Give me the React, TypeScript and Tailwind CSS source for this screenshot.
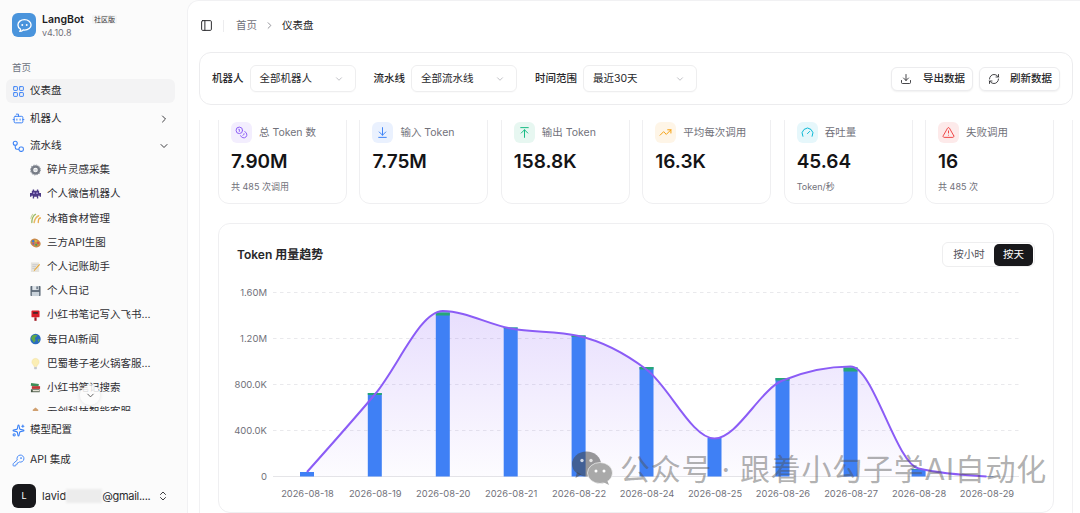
import React from "react";
import {
  LayoutGrid,
  Bot,
  ChevronRight,
  ChevronDown,
  ChevronsUpDown,
  Sparkles,
  KeyRound,
  PanelLeft,
  Download,
  RefreshCw,
  Coins,
  ArrowDownToLine,
  ArrowUpToLine,
  TrendingUp,
  Gauge,
  TriangleAlert,
} from "lucide-react";

const FONT = "font-['Inter','Noto_Sans_CJK_SC',sans-serif]";

const Gear = () => (
  <svg viewBox="0 0 12 12" className="w-[12px] h-[12px]">
    <circle cx="6" cy="6" r="3.900" fill="none" stroke="#777c86" strokeWidth="2.800" />
    <circle cx="6" cy="6" r="5.400" fill="none" stroke="#a0a5ad" strokeWidth="1.200" strokeDasharray="1.400 1.400" />
    <circle cx="6" cy="6" r="1.500" fill="#d5d8dc" />
  </svg>
);
const Alien = () => (
  <svg viewBox="0 0 12 12" className="w-[12px] h-[12px]">
    <path d="M3 1h1.500v1.500h3V1H9v1.500h1V5h2v4h-1.500V8H9v3H7.500V9h-3v2H3V8H1.500v1H0V5h2V2.500h1z" fill="#4c3a86" />
    <rect x="3.600" y="4.200" width="1.400" height="1.800" fill="#b9a6e8" />
    <rect x="7" y="4.200" width="1.400" height="1.800" fill="#b9a6e8" />
  </svg>
);
const Rice = () => (
  <svg viewBox="0 0 12 12" className="w-[12px] h-[12px]" fill="none" strokeLinecap="round">
    <path d="M2 11C2 7 3 4 6 2" stroke="#9ab860" strokeWidth="1.400" />
    <path d="M4.500 11C5 8 6 5 9.500 3.500" stroke="#e8b860" strokeWidth="1.600" />
    <path d="M9 11C9 8 10 6 11.500 6" stroke="#e8a848" strokeWidth="1.400" />
    <path d="M1 6.500C1.200 4.500 2 3 3 2" stroke="#c9d49a" strokeWidth="1.200" />
  </svg>
);
const Palette = () => (
  <svg viewBox="0 0 12 12" className="w-[12px] h-[12px]">
    <ellipse cx="6" cy="6" rx="5.800" ry="4.600" fill="#c98a4a" transform="rotate(25 6 6)" />
    <circle cx="3.400" cy="4" r="1.300" fill="#3a7bd5" />
    <circle cx="6.400" cy="3.800" r="1.200" fill="#e0c030" />
    <circle cx="8.800" cy="6" r="1.200" fill="#d84848" />
    <circle cx="6.800" cy="8" r="1.200" fill="#50a050" />
    <circle cx="3.600" cy="6.800" r="1" fill="#9050b0" />
  </svg>
);
const Memo = () => (
  <svg viewBox="0 0 12 12" className="w-[12px] h-[12px]">
    <rect x="1" y="1" width="9" height="10.400" fill="#e6e4de" />
    <path d="M2.500 3.500h6M2.500 5.500h4M2.500 7.500h3" stroke="#b8bcc4" strokeWidth=".7" />
    <path d="M11 3.500L5.500 9.500 4 11l.6-2L10 2.800z" fill="#e8a838" />
  </svg>
);
const Floppy = () => (
  <svg viewBox="0 0 12 12" className="w-[12px] h-[12px]">
    <rect x="0.500" y="0.500" width="11" height="11" rx=".8" fill="#5d6a78" />
    <rect x="2.500" y="0.500" width="7" height="4.500" fill="#dfe5ea" />
    <rect x="7" y="1" width="1.500" height="3" fill="#5d6a78" />
    <rect x="2" y="7" width="8" height="4.500" fill="#c9d2da" />
  </svg>
);
const Postbox = () => (
  <svg viewBox="0 0 12 12" className="w-[12px] h-[13px]">
    <rect x="1.600" y="0.500" width="8.800" height="7.500" rx="1" fill="#d81e28" />
    <rect x="3.400" y="2.400" width="5.200" height="1.600" fill="#2a2a2a" />
    <rect x="4.800" y="8" width="2.400" height="3.800" fill="#a01820" />
  </svg>
);
const Globe = () => (
  <svg viewBox="0 0 12 12" className="w-[12px] h-[12px]">
    <circle cx="6" cy="6" r="5.700" fill="#2a6cc0" />
    <path d="M3 2c2-1 4-1 5 0-1 1.500-1 2-2.500 2.500C5 6 6.500 6.500 6 8 5 9 4.500 10 4 10 3.500 8 2 7 1.200 5.500 1.500 4 2 3 3 2zM8.500 6.500l2-.5c0 1.500-.5 2.500-1.500 3.500z" fill="#5fa848" />
  </svg>
);
const Bulb = () => (
  <svg viewBox="0 0 12 14" className="w-[12px] h-[14px]">
    <path d="M6 .8a4 4 0 0 0-2.400 7.200c.6.5.8 1 .8 1.800h3.200c0-.8.2-1.300.8-1.800A4 4 0 0 0 6 .8z" fill="#fbeeb4" stroke="#f0dfa0" strokeWidth=".5" />
    <rect x="4.500" y="10.200" width="3" height="2.400" rx=".6" fill="#c4c8cc" />
  </svg>
);
const Books = () => (
  <svg viewBox="0 0 12 12" className="w-[12px] h-[12px]">
    <rect x="1" y="1" width="8.500" height="3" fill="#3e8e58" transform="rotate(8 5 2.500)" />
    <rect x="2" y="4" width="9" height="3" fill="#c03838" />
    <rect x="1" y="7.400" width="9.500" height="3.200" fill="#4a5a48" />
    <rect x="3" y="8.200" width="7" height="1.400" fill="#e8e4d8" />
  </svg>
);
const School = () => (
  <svg viewBox="0 0 12 12" className="w-[12px] h-[12px]">
    <path d="M6 1l3 2.500v1.500H3V3.500z" fill="#d0a070" />
    <rect x="1" y="5" width="10" height="6.500" fill="#cfe0ea" />
    <rect x="2.500" y="6.500" width="1.500" height="1.500" fill="#5a90c0" />
    <rect x="8" y="6.500" width="1.500" height="1.500" fill="#5a90c0" />
  </svg>
);

const FlowIcon = () => (
  <svg viewBox="0 0 24 24" className="w-[13px] h-[13px] text-[#3b82f6]" fill="none" stroke="currentColor" strokeWidth="2">
    <circle cx="6" cy="6" r="3.700" />
    <rect x="13" y="13" width="8" height="8" rx="3" />
    <path d="M6 9.700V14a3 3 0 0 0 3 3h4" />
  </svg>
);

const pipelines: [React.ReactNode, string][] = [
  [<Gear />, "碎片灵感采集"],
  [<Alien />, "个人微信机器人"],
  [<Rice />, "冰箱食材管理"],
  [<Palette />, "三方API生图"],
  [<Memo />, "个人记账助手"],
  [<Floppy />, "个人日记"],
  [<Postbox />, "小红书笔记写入飞书..."],
  [<Globe />, "每日AI新闻"],
  [<Bulb />, "巴蜀巷子老火锅客服..."],
  [<Books />, "小红书笔记搜索"],
  [<School />, "云创科技智能客服"],
];

function Logo() {
  return (
    <div className="w-6 h-6 rounded-[6px] bg-[#4a94dc] flex items-center justify-center shrink-0">
      <svg viewBox="0 0 24 24" className="w-[19px] h-[19px]" fill="none">
        <path
          d="M12 4.500c-4.700 0-8.300 3-8.300 6.800 0 2.300 1.300 4.200 3.400 5.400-.1 1-.6 2-1.200 2.700 1.700-.1 3.300-.8 4.400-1.800.6.100 1.100.2 1.700.2 4.700 0 8.300-3 8.300-6.500S16.700 4.500 12 4.500z"
          stroke="#fff"
          strokeWidth="1.700"
          strokeLinejoin="round"
        />
        <circle cx="9.200" cy="11.300" r="1.200" fill="#fff" />
        <circle cx="14.800" cy="11.300" r="1.200" fill="#fff" />
      </svg>
    </div>
  );
}

function Sidebar() {
  return (
    <aside className="w-[187px] shrink-0 h-full flex flex-col bg-[#fbfbfb]">
      <div className="flex gap-[6px] pl-3 pt-[13px] h-[49px] shrink-0 items-start">
        <Logo />
        <div className="flex flex-col -mt-[0.500px]">
          <div className="flex items-center gap-[8px] h-[14px]">
            <span className="text-[10.500px] font-semibold text-[#1c1c1e]">LangBot</span>
            <span className="text-[7px] text-[#333] bg-[#f4f4f4] rounded-[2px] px-[2px] leading-[9px]">社区版</span>
          </div>
          <span className="text-[9px] leading-[12px] text-[#71717a]">v4.10.8</span>
        </div>
      </div>
      <div className="pl-3 pt-[12px] text-[9.500px] leading-[14px] text-[#6b7280]">首页</div>
      <div className="px-[6px] mt-[4px] flex flex-col gap-[3.500px] shrink-0">
        <div className="h-6 rounded-[6px] bg-[#f3f3f4] flex items-center pl-[6px] gap-[5px] text-[#2a2a2d] text-[10.500px] mr-[6px]">
          <LayoutGrid size={13} strokeWidth={1.800} className="text-[#3b82f6]" />
          <span>仪表盘</span>
        </div>
        <div className="h-6 flex items-center pl-[6px] gap-[5px] text-[#2a2a2d] text-[10.500px] mr-[6px]">
          <Bot size={13} strokeWidth={1.800} className="text-[#3b82f6]" />
          <span className="flex-1">机器人</span>
          <ChevronRight size={12} strokeWidth={1.800} className="mr-[5px] text-[#27272a]" />
        </div>
        <div className="h-6 flex items-center pl-[6px] gap-[5px] text-[#2a2a2d] text-[10.500px] mr-[6px]">
          <FlowIcon />
          <span className="flex-1">流水线</span>
          <ChevronDown size={12} strokeWidth={1.800} className="mr-[5px] text-[#27272a]" />
        </div>
      </div>
      <div className="relative h-[253px] shrink-0 overflow-hidden">
        <div className="flex flex-col pl-[30px]">
          {pipelines.map(([icon, name]) => (
            <div key={name} className="h-[24.200px] shrink-0 flex items-center gap-[6px] text-[10.500px] text-[#2e2e33]">
              <span className="w-[11px] flex items-center justify-center">{icon}</span>
              <span>{name}</span>
            </div>
          ))}
        </div>
        <div className="absolute left-[80px] top-[227px] w-5 h-5 rounded-full bg-[#fbfbfb]/85 shadow-[0_0_4px_rgba(0,0,0,0.12)] flex items-center justify-center">
          <ChevronDown size={11} className="text-[#555]" />
        </div>
      </div>
      <div className="flex flex-col pl-[12px] pt-[8px] shrink-0">
        <div className="h-[22px] flex items-center gap-[5px] text-[10.500px] text-[#2a2a2d]">
          <Sparkles size={13} strokeWidth={2} className="text-[#3b82f6]" />
          <span>模型配置</span>
        </div>
        <div className="h-[22px] mt-2 flex items-center gap-[5px] text-[10.500px] text-[#2a2a2d]">
          <KeyRound size={13} strokeWidth={1.700} className="text-[#3b82f6]" />
          <span>API 集成</span>
        </div>
      </div>
      <div className="flex items-center pl-3 mt-[13px] shrink-0">
        <div className="w-6 h-6 rounded-[6px] bg-[#18181b] text-white text-[9px] flex items-center justify-center shrink-0">L</div>
        <div className="flex items-center ml-[6px] text-[11px] text-[#2a2a2d] w-[109px] shrink-0 whitespace-nowrap">
          <span>lavid</span>
          <span className="w-[36px] h-[14px] shrink-0 bg-[#ececec] blur-[1px]" />
          <span className="tracking-[-0.3px]">@gmail....</span>
        </div>
        <ChevronsUpDown size={12} strokeWidth={1.800} className="ml-[6px] text-[#27272a]" />
      </div>
    </aside>
  );
}

function Select({ text, width }: { text: string; width: string }) {
  return (
    <div className={`${width} h-[27px] rounded-[6px] border border-[#eeeeef] bg-white shadow-[0_1px_1px_rgba(0,0,0,0.02)] flex items-center justify-between pl-[9px] pr-[11px] text-[10.500px] text-[#27272a]`}>
      <span>{text}</span>
      <ChevronDown size={10} className="text-[#b5b5ba]" />
    </div>
  );
}

function ActionButton({ icon, text, width }: { icon: React.ReactNode; text: string; width: string }) {
  return (
    <div className={`${width} h-6 rounded-[6px] border border-[#ececee] bg-white shadow-[0_1px_2px_rgba(0,0,0,0.06)] flex items-center justify-between pl-[8px] pr-[7px] text-[10.500px] font-medium text-[#27272a]`}>
      {icon}
      <span>{text}</span>
    </div>
  );
}

type Stat = { icon: React.ReactNode; bg: string; label: string; value: string; sub?: string };
const stats: Stat[] = [
  { icon: <Coins size={13} strokeWidth={1.800} className="text-[#8b5cf6]" />, bg: "bg-[#f3eefe]", label: "总 Token 数", value: "7.90M", sub: "共 485 次调用" },
  { icon: <ArrowDownToLine size={13} strokeWidth={1.800} className="text-[#3b82f6]" />, bg: "bg-[#eaf1fe]", label: "输入 Token", value: "7.75M" },
  { icon: <ArrowUpToLine size={13} strokeWidth={1.800} className="text-[#10b981]" />, bg: "bg-[#e7f7f1]", label: "输出 Token", value: "158.8K" },
  { icon: <TrendingUp size={13} strokeWidth={1.800} className="text-[#f59e0b]" />, bg: "bg-[#fef5e7]", label: "平均每次调用", value: "16.3K" },
  { icon: <Gauge size={13} strokeWidth={1.800} className="text-[#06b6d4]" />, bg: "bg-[#e6f7fb]", label: "吞吐量", value: "45.64", sub: "Token/秒" },
  { icon: <TriangleAlert size={13} strokeWidth={1.800} className="text-[#ef4444]" />, bg: "bg-[#fdeaea]", label: "失败调用", value: "16", sub: "共 485 次" },
];

function StatCard({ s }: { s: Stat }) {
  return (
    <div className="h-[95px] -mt-[11px] border border-[#efeff1] rounded-[11px] bg-white pl-[12px] pt-[12px]">
      <div className="flex items-center gap-[7px]">
        <div className={`w-[21px] h-[21px] rounded-[6px] ${s.bg} flex items-center justify-center`}>{s.icon}</div>
        <span className="text-[10.500px] text-[#71717a]">{s.label}</span>
      </div>
      <div className="mt-[7px] text-[19px] leading-[24px] font-semibold text-[#141416]">{s.value}</div>
      {s.sub && <div className="mt-[7px] text-[9px] leading-[12px] text-[#71717a]">{s.sub}</div>}
    </div>
  );
}

const xs = [307, 374.8, 442.8, 510.7, 578.6, 646.5, 714.5, 782.5, 850.6, 918.6, 986.5];
const labels = ["2026-08-18", "2026-08-19", "2026-08-20", "2026-08-21", "2026-08-22", "2026-08-24", "2026-08-25", "2026-08-26", "2026-08-27", "2026-08-28", "2026-08-29"];
const base = 476.5;
const barTop = [472, 393, 312.5, 327.5, 335.5, 367, 438, 378, 367.5, 469, 476];
const capH = [0, 2, 3, 1, 1.500, 2.500, 0, 2.500, 4, 0.500, 0];
const lineY = [472, 394.500, 311, 328.500, 336, 369.500, 438.500, 380.500, 366.500, 468.500, 476.500];

function monotonePath(px: number[], py: number[]) {
  const n = px.length;
  const h = px.slice(1).map((x, i) => x - px[i]);
  const sl = py.slice(1).map((y, i) => (y - py[i]) / h[i]);
  const t: number[] = new Array(n).fill(0);
  for (let i = 1; i < n - 1; i++) {
    const a = sl[i - 1];
    const b = sl[i];
    const p = (a * h[i] + b * h[i - 1]) / (h[i - 1] + h[i]);
    t[i] = (Math.sign(a) + Math.sign(b)) * Math.min(Math.abs(a), Math.abs(b), 0.5 * Math.abs(p));
  }
  t[0] = (3 * sl[0] - t[1]) / 2;
  t[n - 1] = (3 * sl[n - 2] - t[n - 2]) / 2;
  let d = `M${px[0]},${py[0]}`;
  for (let i = 0; i < n - 1; i++) {
    const dx = h[i] / 3;
    d += `C${px[i] + dx},${py[i] + dx * t[i]} ${px[i + 1] - dx},${py[i + 1] - dx * t[i + 1]} ${px[i + 1]},${py[i + 1]}`;
  }
  return d;
}

function Chart() {
  const line = monotonePath(xs, lineY);
  const area = `${line}L${xs[10]},${base}L${xs[0]},${base}Z`;
  const ticks: [number, string][] = [
    [292.5, "1.60M"],
    [338.5, "1.20M"],
    [384.5, "800.0K"],
    [430.5, "400.0K"],
    [476.5, "0"],
  ];
  return (
    <svg viewBox="218 270 836 243" className="w-[836px] h-[243px] block absolute -left-px top-[46px]">
      <defs>
        <linearGradient id="areaFill" x1="0" y1="0" x2="0" y2="1">
          <stop offset="0%" stopColor="#8b5cf6" stopOpacity="0.2" />
          <stop offset="100%" stopColor="#8b5cf6" stopOpacity="0.02" />
        </linearGradient>
      </defs>
      {ticks.map(([y, t]) => (
        <g key={t}>
          {t !== "0" ? (
            <line x1="273" x2="1019" y1={y} y2={y} stroke="#e9e9ec" strokeWidth="1" strokeDasharray="3.500 3.500" />
          ) : (
            <line x1="273" x2="1019" y1={y} y2={y} stroke="#e5e5e8" strokeWidth="1" />
          )}
          <text x="267" y={y + 3.500} textAnchor="end" fontSize="9.500" fill="#71717a">
            {t}
          </text>
        </g>
      ))}
      <path d={area} fill="url(#areaFill)" />
      {xs.map((x, i) => (
        <g key={labels[i]}>
          <rect x={x - 7} y={barTop[i]} width="14" height={base - barTop[i]} fill="#3f80f5" />
          {capH[i] > 0 && <rect x={x - 7} y={barTop[i]} width="14" height={capH[i]} fill="#26a777" />}
          <text x={x + 0.5} y="496.500" textAnchor="middle" fontSize="9.300" fill="#71717a">
            {labels[i]}
          </text>
        </g>
      ))}
      <path d={line} fill="none" stroke="#8b5cf6" strokeWidth="2" />
    </svg>
  );
}

function Watermark() {
  return (
    <div className="absolute left-[571px] top-[450px] flex items-center gap-[7px] pointer-events-none">
      <svg viewBox="0 0 42 36" className="w-[42px] h-[36px]">
        <ellipse cx="15.500" cy="14" rx="14.500" ry="12.500" fill="rgba(70,70,70,0.55)" />
        <path d="M6 22l-1.500 6 6-3.500z" fill="rgba(70,70,70,0.55)" />
        <circle cx="11" cy="10.500" r="1.700" fill="#fff" fillOpacity="0.75" />
        <circle cx="20" cy="10.500" r="1.700" fill="#fff" fillOpacity="0.75" />
        <ellipse cx="29" cy="23" rx="12.500" ry="10.500" fill="#a9a9a9" stroke="#fff" strokeOpacity="0.6" strokeWidth="1" />
        <path d="M36 30l2 5-6-3z" fill="#a9a9a9" />
        <circle cx="25" cy="21" r="1.500" fill="#fff" />
        <circle cx="33" cy="21" r="1.500" fill="#fff" />
      </svg>
      <span className="mt-[1px] text-[30px] leading-[30px] text-[rgba(80,80,80,0.45)] tracking-[0.75px] whitespace-nowrap">公众号 · 跟着小勾子学AI自动化</span>
    </div>
  );
}

export default function App() {
  return (
    <div className={`${FONT} relative w-[1080px] h-[513px] overflow-hidden flex bg-[#fbfbfb]`}>
      <Sidebar />
      <main className="flex-1 h-full bg-white rounded-tl-[12px] border-l border-t border-[#f1f1f3] flex flex-col pl-[11px] pr-[7px] overflow-hidden">
        <header className="h-[49px] shrink-0 flex items-center">
          <PanelLeft size={13} strokeWidth={1.800} className="text-[#27272a] ml-[1px]" />
          <span className="w-px h-3 bg-[#ececee] ml-[10px] mr-[12px]" />
          <span className="text-[10.500px] text-[#71717a]">首页</span>
          <ChevronRight size={11} className="text-[#8a8a90] mx-[7px]" />
          <span className="text-[10.500px] text-[#27272a]">仪表盘</span>
        </header>
        <section className="h-[53px] mt-[2px] shrink-0 bg-white border border-[#ececee] rounded-[12px] flex items-center pl-3 pr-3">
          <span className="text-[10.500px] font-medium text-[#27272a] mr-[6px]">机器人</span>
          <Select text="全部机器人" width="w-[106px]" />
          <span className="text-[10.500px] font-medium text-[#27272a] ml-[18px] mr-[6px]">流水线</span>
          <Select text="全部流水线" width="w-[106px]" />
          <span className="text-[10.500px] font-medium text-[#27272a] ml-[18px] mr-[6px]">时间范围</span>
          <Select text="最近30天" width="w-[114px]" />
          <div className="flex-1" />
          <div className="flex gap-[6px] mt-[1px]">
            <ActionButton icon={<Download size={12} strokeWidth={1.700} />} text="导出数据" width="w-[82px]" />
            <ActionButton icon={<RefreshCw size={12} strokeWidth={1.700} />} text="刷新数据" width="w-[81px]" />
          </div>
        </section>
        <section className="relative flex-1 mt-[15px] border-x border-[#f1f1f3] px-[18px] overflow-hidden">
          <div className="grid grid-cols-6 gap-x-[12.500px]">
            {stats.map((s) => (
              <StatCard key={s.label} s={s} />
            ))}
          </div>
          <div className="relative mt-[19px] h-[290px] border border-[#efeff1] rounded-[12px] bg-white">
            <div className="flex items-center justify-between pl-[18px] pr-[18px] pt-[18px]">
              <span className="text-[12px] font-semibold text-[#27272a]">Token 用量趋势</span>
              <div className="flex h-[25px] w-[93px] border border-[#eeeeef] rounded-[6px] p-px text-[10.500px] items-center">
                <span className="flex-1 text-center text-[#52525b]">按小时</span>
                <span className="w-[39px] h-[22px] rounded-[5px] bg-[#18181b] text-white flex items-center justify-center">按天</span>
              </div>
            </div>
            <Chart />
          </div>
        </section>
      </main>
      <Watermark />
    </div>
  );
}
